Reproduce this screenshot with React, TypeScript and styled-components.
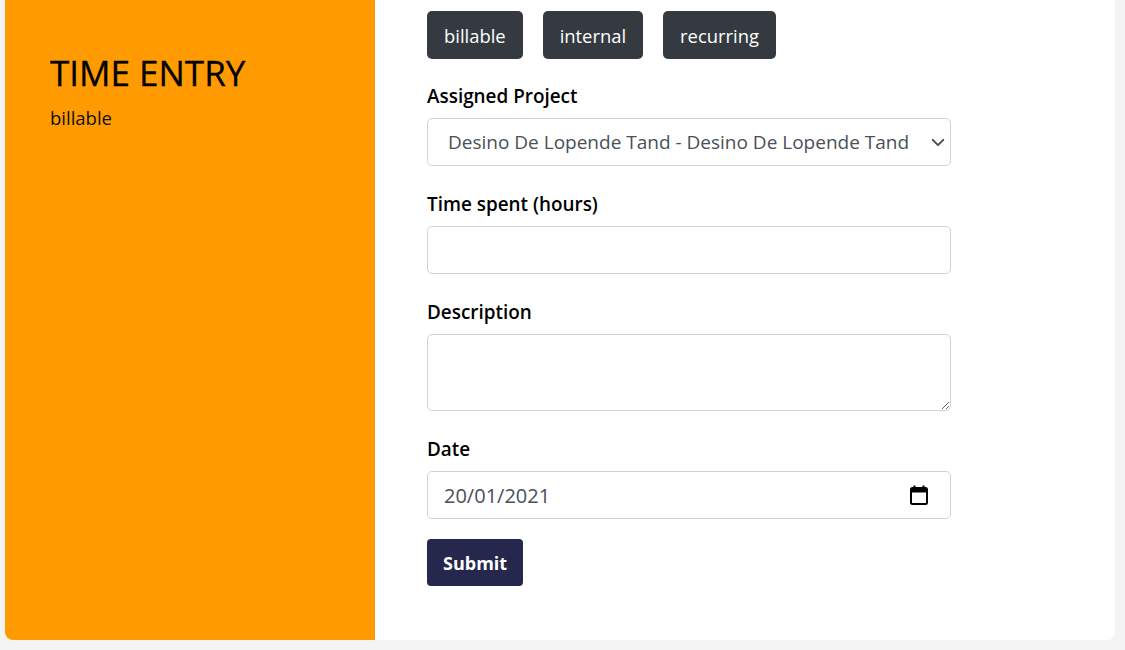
import React from "react";
import styled, { createGlobalStyle } from "styled-components";

const GlobalStyle = createGlobalStyle`
  body {
    margin: 0;
    background: #f4f4f4;
    font-family: "Open Sans", "Liberation Sans", sans-serif;
    color: #212529;
  }
  * { box-sizing: border-box; }
`;

const Page = styled.div`
  padding: 0 10px 10px 5px;
`;

const Card = styled.div`
  display: flex;
  height: 640px;
  background: #fff;
  border-radius: 0 0 8px 8px;
  overflow: hidden;
`;

const Side = styled.aside`
  width: 370px;
  flex-shrink: 0;
  background: #ff9b00;
  padding: 52px 45px;
`;

const Title = styled.h1`
  margin: 0 0 10px;
  font-size: 35px;
  font-weight: 400;
  line-height: 1.2;
  color: #000;
  -webkit-text-stroke: 0.3px #000;
`;

const Sub = styled.div`
  font-size: 18.5px;
  line-height: 1.5;
  color: #111;
`;

const Main = styled.main`
  flex: 1;
  padding: 11px 52px;
`;

const Form = styled.form`
  width: 524px;
`;

const TypeRow = styled.div`
  display: flex;
  gap: 20px;
  margin-bottom: 23px;
`;

const TypeButton = styled.button`
  height: 48px;
  padding: 0 17px;
  border: none;
  border-radius: 5px;
  background: #343a40;
  color: #fff;
  font-family: inherit;
  font-size: 18.4px;
  cursor: pointer;
`;

const Field = styled.div<{ $gap?: number }>`
  margin-bottom: ${(p) => p.$gap ?? 24}px;
`;

const Label = styled.label`
  display: block;
  font-size: 18.9px;
  font-weight: 600;
  line-height: 28px;
  margin-bottom: 8px;
  color: #000;
`;

const inputBase = `
  display: block;
  width: 100%;
  border: 1px solid #ced4da;
  border-radius: 5px;
  background-color: #fff;
  font-family: inherit;
  font-size: 19px;
  color: #495057;
`;

const Select = styled.select`
  ${inputBase}
  height: 48px;
  padding: 0 40px 0 20px;
  appearance: none;
  background-image: url("data:image/svg+xml,%3csvg xmlns='http://www.w3.org/2000/svg' viewBox='0 0 16 12'%3e%3cpath fill='none' stroke='%23495057' stroke-linecap='round' stroke-linejoin='round' stroke-width='2.4' d='M2 3l6 6 6-6'/%3e%3c/svg%3e");
  background-repeat: no-repeat;
  background-position: right 5px center;
  background-size: 14px 11px;
`;

const Input = styled.input`
  ${inputBase}
  height: 48px;
  padding: 0 16px;
`;

const TextArea = styled.textarea`
  ${inputBase}
  height: 77px;
  padding: 8px 16px;
`;

const DateBox = styled.div`
  ${inputBase}
  height: 48px;
  padding: 0 21px 0 16px;
  display: flex;
  align-items: center;
  justify-content: space-between;
  font-size: 20px;
`;

const Submit = styled.button`
  height: 47px;
  padding: 0 16px;
  border: none;
  border-radius: 4px;
  background: #25274d;
  color: #fff;
  font-family: inherit;
  font-size: 18px;
  font-weight: 700;
  cursor: pointer;
`;

const CalendarIcon = () => (
  <svg width="20" height="22" viewBox="0 0 20 22" fill="none" stroke="#000">
    <rect x="2" y="4" width="16" height="16" rx="1.5" strokeWidth="2" />
    <path d="M2 6.5h16" strokeWidth="4" />
    <path d="M5.5 1.5v3M14.5 1.5v3" strokeWidth="2" />
  </svg>
);

export default function App() {
  return (
    <>
      <GlobalStyle />
      <Page>
        <Card>
          <Side>
            <Title>TIME ENTRY</Title>
            <Sub>billable</Sub>
          </Side>
          <Main>
            <Form onSubmit={(e) => e.preventDefault()}>
              <TypeRow>
                <TypeButton type="button">billable</TypeButton>
                <TypeButton type="button">internal</TypeButton>
                <TypeButton type="button">recurring</TypeButton>
              </TypeRow>
              <Field>
                <Label>Assigned Project</Label>
                <Select defaultValue="1">
                  <option value="1">Desino De Lopende Tand - Desino De Lopende Tand</option>
                </Select>
              </Field>
              <Field>
                <Label>Time spent (hours)</Label>
                <Input type="text" />
              </Field>
              <Field>
                <Label>Description</Label>
                <TextArea />
              </Field>
              <Field $gap={20}>
                <Label>Date</Label>
                <DateBox>
                  <span>20/01/2021</span>
                  <CalendarIcon />
                </DateBox>
              </Field>
              <Submit type="submit">Submit</Submit>
            </Form>
          </Main>
        </Card>
      </Page>
    </>
  );
}
